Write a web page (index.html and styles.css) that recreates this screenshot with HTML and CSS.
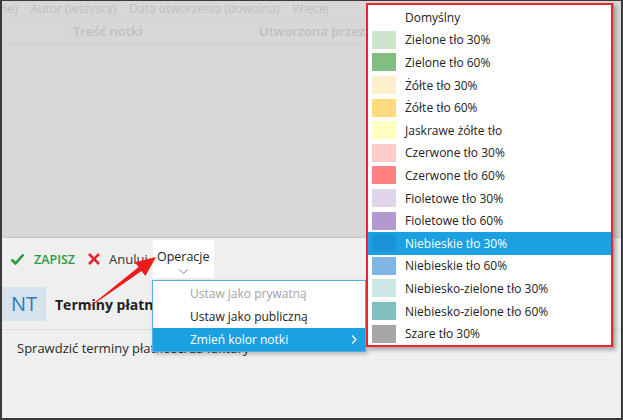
FILE: index.html
```html
<!DOCTYPE html>
<html lang="pl">
<head>
  <meta charset="UTF-8">
  <title>Notka - zmiana koloru</title>
  <link rel="stylesheet" href="styles.css">
</head>
<body>
  <div class="screen">

    <div class="backdrop">
      <div class="filters">
        <span>ne)</span>
        <span>Autor (wszyscy)</span>
        <span>Data utworzenia (dowolna)</span>
        <span>Więcej</span>
      </div>
      <div class="grid-head">
        <div class="col-sel"></div>
        <div class="col-title">Treść notki</div>
        <div class="col-author">Utworzona przez</div>
      </div>
    </div>

    <div class="panel">
      <div class="toolbar">
        <div class="tb save">
          <svg width="15" height="12" viewBox="0 0 15 12"><path d="M1.5 6.5 L5.5 10.5 L13.5 1.5" fill="none" stroke="#2b9a3c" stroke-width="2.6"/></svg>
          <span>ZAPISZ</span>
        </div>
        <div class="tb cancel">
          <svg width="12" height="12" viewBox="0 0 12 12"><path d="M1 1 L11 11 M11 1 L1 11" stroke="#e3262d" stroke-width="2.6"/></svg>
          <span>Anuluj</span>
        </div>
        <div class="tb ops">
          <span>Operacje</span>
          <svg width="9" height="5" viewBox="0 0 9 5"><path d="M0.5 0.5 L4.5 4.5 L8.5 0.5" fill="none" stroke="#888" stroke-width="1"/></svg>
        </div>
      </div>

      <div class="note-head">
        <div class="avatar">NT</div>
        <div class="note-title">Terminy płatności</div>
      </div>
      <div class="note-body">Sprawdzić terminy płatności za faktury</div>
    </div>

    <!-- menu operacji -->
    <div class="menu ctx">
      <div class="ctx-item disabled">Ustaw jako prywatną</div>
      <div class="ctx-item">Ustaw jako publiczną</div>
      <div class="ctx-item active">
        <span>Zmień kolor notki</span>
        <svg width="6" height="9" viewBox="0 0 6 9"><path d="M1 0.5 L5 4.5 L1 8.5" fill="none" stroke="#fff" stroke-width="1.2"/></svg>
      </div>
    </div>

    <!-- podmenu kolorów -->
    <div class="menu colors">
      <div class="color-item"><i class="sw"></i>Domyślny</div>
      <div class="color-item"><i class="sw green30"></i>Zielone tło 30%</div>
      <div class="color-item"><i class="sw green60"></i>Zielone tło 60%</div>
      <div class="color-item"><i class="sw yellow30"></i>Żółte tło 30%</div>
      <div class="color-item"><i class="sw yellow60"></i>Żółte tło 60%</div>
      <div class="color-item"><i class="sw bright"></i>Jaskrawe żółte tło</div>
      <div class="color-item"><i class="sw red30"></i>Czerwone tło 30%</div>
      <div class="color-item"><i class="sw red60"></i>Czerwone tło 60%</div>
      <div class="color-item"><i class="sw violet30"></i>Fioletowe tło 30%</div>
      <div class="color-item"><i class="sw violet60"></i>Fioletowe tło 60%</div>
      <div class="color-item active"><i class="sw blue30"></i>Niebieskie tło 30%</div>
      <div class="color-item"><i class="sw blue60"></i>Niebieskie tło 60%</div>
      <div class="color-item"><i class="sw teal30"></i>Niebiesko-zielone tło 30%</div>
      <div class="color-item"><i class="sw teal60"></i>Niebiesko-zielone tło 60%</div>
      <div class="color-item"><i class="sw gray30"></i>Szare tło 30%</div>
    </div>

    <svg class="arrow" width="623" height="420" viewBox="0 0 623 420">
      <polygon points="84,311 138.6,267.1 134.8,262.2 156,257 145.4,276 141.6,271.1" fill="#ea1c1c"/>
    </svg>
  </div>
</body>
</html>
```

FILE: styles.css
```css
html, body {
  margin: 0;
  padding: 0;
}

body {
  font-family: 'Open Sans', 'Noto Sans', sans-serif;
  color: #222;
}

.screen {
  position: relative;
  width: 623px;
  height: 420px;
  box-sizing: border-box;
  border: 2px solid #3a3a3a;
  border-top-width: 1px;
  display: flex;
  flex-direction: column;
  overflow: hidden;
  background: #efefef;
}

/* przyciemnione tło listy */
.backdrop {
  height: 236px;
  background: #d7d7d7;
  color: #bfbfbf;
}

.filters {
  height: 14px;
  overflow: hidden;
  display: flex;
  align-items: flex-end;
  gap: 13px;
  margin-left: -2px;
  font-size: 12px;
  line-height: 13px;
}

.grid-head {
  margin-top: 3px;
  height: 24px;
  display: flex;
  border-top: 1px solid #d0d0d0;
  border-bottom: 1px solid #cdcdcd;
  font-size: 13px;
  font-weight: 600;
  line-height: 24px;
}

.col-sel {
  width: 64px;
  border-right: 1px solid #d0d0d0;
}

.col-title {
  width: 180px;
  padding-left: 6px;
}

.col-author {
  padding-left: 6px;
}

/* panel szczegółów */
.panel {
  flex: 1;
  border-top: 1px solid #c6c6c6;
  background: #efefef;
}

.toolbar {
  height: 42px;
  display: flex;
  align-items: center;
  font-size: 13px;
}

.tb {
  display: flex;
  align-items: center;
  gap: 9px;
}

.save {
  padding-left: 8px;
  color: #2b9a3c;
  font-weight: 600;
  font-size: 12.5px;
}

.cancel {
  margin-left: 13px;
  color: #333;
}

.ops {
  margin-left: 5px;
  align-self: flex-start;
  margin-top: 2px;
  height: 38px;
  width: 61px;
  box-sizing: border-box;
  background: #fff;
  flex-direction: column;
  justify-content: center;
  gap: 4px;
  padding-top: 4px;
  font-size: 12.5px;
  color: #222;
}

.note-head {
  display: flex;
  align-items: center;
  gap: 9px;
  padding-top: 7px;
  padding-bottom: 8px;
  border-bottom: 1px solid #dcdcdc;
}

.avatar {
  width: 44px;
  height: 34px;
  background: #d6e3ec;
  color: #2a7cc0;
  font-size: 20px;
  line-height: 34px;
  text-align: center;
}

.note-title {
  font-size: 14px;
  font-weight: 700;
  color: #1e1e1e;
}

.note-body {
  padding: 9px 15px;
  font-size: 13px;
  line-height: 18px;
  color: #2a2a2a;
}

/* menu kontekstowe */
.menu {
  position: absolute;
  background: #fff;
  font-size: 12px;
  box-shadow: 2px 2px 4px rgba(0, 0, 0, 0.25);
}

.ctx {
  left: 150px;
  top: 279px;
  width: 212px;
  padding-top: 1px;
  border: 1px solid #5aaee3;
}

.ctx-item {
  height: 23px;
  line-height: 23px;
  padding-left: 37px;
  padding-right: 8px;
  display: flex;
  align-items: center;
  justify-content: space-between;
}

.ctx-item.disabled {
  color: #a3a3a3;
}

.ctx-item.active {
  background: #1ba1e2;
  color: #fff;
}

.colors {
  left: 364px;
  top: 2px;
  width: 243px;
  padding: 1px 0 0;
  border: 2px solid #e5262c;
  box-shadow: 1px 0 0 #5aaee3, 3px 3px 4px rgba(0, 0, 0, 0.3);
}

.color-item {
  height: 22.6px;
  display: flex;
  align-items: center;
  gap: 9px;
  padding-left: 4px;
}

.color-item.active {
  background: #1ba1e2;
  color: #fff;
}

.sw {
  width: 24px;
  height: 18px;
}

.green30 { background: #cce5cc; }
.green60 { background: #80bf80; }
.yellow30 { background: #ffefcc; }
.yellow60 { background: #ffdb80; }
.bright { background: #ffffc0; }
.red30 { background: #ffcccc; }
.red60 { background: #ff8080; }
.violet30 { background: #e0d5ea; }
.violet60 { background: #b399d1; }
.blue30 { background: #1a93da; }
.blue60 { background: #80b5e6; }
.teal30 { background: #cce5e5; }
.teal60 { background: #80bfbf; }
.gray30 { background: #a6a6a6; }

.arrow {
  position: absolute;
  left: -2px;
  top: -1px;
  pointer-events: none;
}
```
